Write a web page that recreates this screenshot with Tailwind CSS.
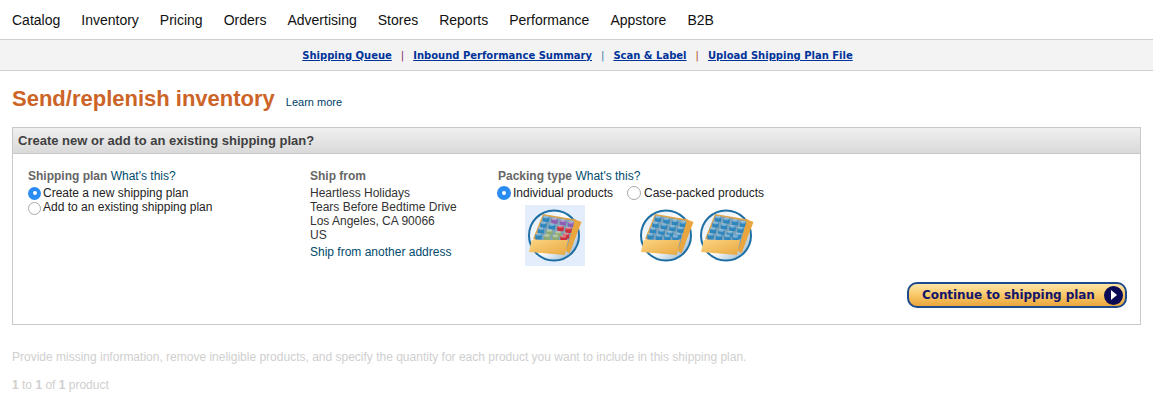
<!DOCTYPE html>
<html>
<head>
<meta charset="utf-8">
<script src="https://cdn.jsdelivr.net/npm/@tailwindcss/browser@4"></script>
</head>
<body class="bg-white font-['Liberation_Sans',Arial,sans-serif] text-[12px] leading-[14px] text-[#333] overflow-hidden">
<svg class="absolute w-0 h-0" aria-hidden="true">
  <defs>
    <linearGradient id="disc" x1="0" y1="0" x2="1" y2="1">
      <stop offset="0" stop-color="#dfeaf3"/><stop offset="0.55" stop-color="#ffffff"/><stop offset="1" stop-color="#7fa6c4"/>
    </linearGradient>
    <linearGradient id="flap" x1="0" y1="0" x2="1" y2="1">
      <stop offset="0" stop-color="#fcd483"/><stop offset="1" stop-color="#e8a940"/>
    </linearGradient>
    <g id="k">
      <rect x="-3.2" y="-2" width="6.4" height="5.3" rx="1" fill="currentColor"/>
      <ellipse cx="0" cy="-1.6" rx="2.8" ry="1.3" fill="#ffffff" fill-opacity="0.35"/>
    </g>
    <g id="box">
      <circle cx="29" cy="30.5" r="25" fill="url(#disc)" stroke="#1c6ea4" stroke-width="2"/>
      <polygon points="18,9 51,14.5 44,46 8,34" fill="#dca348"/>
      <polygon points="18.5,10.5 49.5,16 43,44 10,34" fill="#7fa3ba"/>
    </g>
    <g id="front">
      <polygon points="50,14.5 56.5,17 44.5,48.5 41,46" fill="#eaa63e"/>
      <polygon points="6.7,35 43,35 40,50 4,47" fill="url(#flap)"/>
    </g>
  </defs>
</svg>

<nav class="h-[39px] flex items-center gap-[21px] pl-3 text-[14px] leading-[16px] text-[#111] bg-white">
  <a>Catalog</a><a>Inventory</a><a>Pricing</a><a>Orders</a><a>Advertising</a><a>Stores</a><a>Reports</a><a>Performance</a><a>Appstore</a><a>B2B</a>
</nav>

<div class="h-[32px] pt-[1px] pl-[2px] border-y border-[#cfcfcf] bg-[#f3f3f3] flex items-center justify-center gap-[9px] font-['DejaVu_Sans',Verdana,sans-serif] text-[10px] font-bold text-[#003399]">
  <a class="underline">Shipping Queue</a>
  <span class="font-normal text-[#7a1f5c]">|</span>
  <a class="underline">Inbound Performance Summary</a>
  <span class="font-normal text-[#2a7aa8]">|</span>
  <a class="underline">Scan &amp; Label</a>
  <span class="font-normal text-[#a8461f]">|</span>
  <a class="underline">Upload Shipping Plan File</a>
</div>

<main class="px-3">
  <div class="h-[56px] flex items-center gap-[11px]">
    <h1 class="text-[22px] leading-[26px] font-bold text-[#cc6428]">Send/replenish inventory</h1>
    <a class="text-[11px] leading-[13px] text-[#00406a] mt-[7px]">Learn more</a>
  </div>

  <section class="h-[198px] border border-[#c8c8c8] flex flex-col">
    <div class="h-[26px] flex items-center pl-[5px] border-b border-[#c8c8c8] bg-gradient-to-b from-[#f0f0f0] to-[#d9d9d9] text-[13px] font-bold text-[#3f3f3f]">Create new or add to an existing shipping plan?</div>
    <div class="flex pl-[15px] pt-[15px]">
      <div class="w-[282px]">
        <p class="h-[17px] leading-[14px]"><b class="text-[#666]">Shipping plan</b> <a class="text-[#004b6e]">What's this?</a></p>
        <label class="flex items-center h-[14px] gap-[2px] text-[#222]">
          <span class="w-[13px] h-[13px] rounded-full bg-[#2a8bf2] flex items-center justify-center"><span class="w-[4px] h-[4px] rounded-full bg-white"></span></span>
          <span>Create a new shipping plan</span>
        </label>
        <label class="flex items-center h-[14px] gap-[2px] text-[#222]">
          <span class="w-[13px] h-[13px] rounded-full bg-white border border-[#a9a9a9] mt-[3px]"></span>
          <span>Add to an existing shipping plan</span>
        </label>
      </div>
      <div class="w-[188px] text-[#333]">
        <p class="h-[17px]"><b class="text-[#666]">Ship from</b></p>
        <p>Heartless Holidays</p>
        <p>Tears Before Bedtime Drive</p>
        <p>Los Angeles, CA 90066</p>
        <p>US</p>
        <p class="mt-[3px]"><a class="text-[#004b6e]">Ship from another address</a></p>
      </div>
      <div>
        <p class="h-[17px]"><b class="text-[#666]">Packing type</b> <a class="text-[#004b6e]">What's this?</a></p>
        <div class="flex h-[14px] items-center text-[#222]">
          <label class="flex items-center gap-[2px] w-[130px] -ml-[1px]">
            <span class="w-[14px] h-[14px] rounded-full bg-[#2a8bf2] flex items-center justify-center"><span class="w-[4px] h-[4px] rounded-full bg-white"></span></span>
            <span>Individual products</span>
          </label>
          <label class="flex items-center gap-[3px]">
            <span class="w-[14px] h-[14px] rounded-full bg-white border border-[#a9a9a9]"></span>
            <span>Case-packed products</span>
          </label>
        </div>
        <div class="flex mt-[5px] ml-[27px]">
          <svg class="bg-[#e3edfb] shrink-0" width="60" height="61" viewBox="0 0 60 61">
            <use href="#box"/>
            <use href="#k" x="21" y="13.75" color="#2f86bd"/><use href="#k" x="29.5" y="15.5" color="#8c5fb0"/><use href="#k" x="38" y="17.25" color="#8c5fb0"/><use href="#k" x="46" y="19" color="#8c5fb0"/>
            <use href="#k" x="18.5" y="19.5" color="#2f86bd"/><use href="#k" x="27" y="21.25" color="#2f86bd"/><use href="#k" x="35.5" y="23" color="#cc2f3a"/><use href="#k" x="43.5" y="24.75" color="#cc2f3a"/>
            <use href="#k" x="16" y="25.25" color="#2f86bd"/><use href="#k" x="24.5" y="27" color="#8fab72"/><use href="#k" x="33" y="28.75" color="#8fab72"/><use href="#k" x="41" y="30.5" color="#cc2f3a"/>
            <use href="#k" x="13.5" y="31" color="#2f86bd"/><use href="#k" x="22" y="32" color="#8fab72"/><use href="#k" x="30.5" y="32.5" color="#8fab72"/><use href="#k" x="38.5" y="33" color="#cc2f3a"/>
            <use href="#front"/>
          </svg>
          <svg class="ml-[52px] shrink-0" width="60" height="61" viewBox="0 0 60 61">
            <g id="blue">
            <use href="#box"/>
            <g color="#2f86bd">
            <use href="#k" x="21" y="13.75"/><use href="#k" x="29.5" y="15.5"/><use href="#k" x="38" y="17.25"/><use href="#k" x="46" y="19"/>
            <use href="#k" x="18.5" y="19.5"/><use href="#k" x="27" y="21.25"/><use href="#k" x="35.5" y="23"/><use href="#k" x="43.5" y="24.75"/>
            <use href="#k" x="16" y="25.25"/><use href="#k" x="24.5" y="27"/><use href="#k" x="33" y="28.75"/><use href="#k" x="41" y="30.5"/>
            <use href="#k" x="13.5" y="31"/><use href="#k" x="22" y="32"/><use href="#k" x="30.5" y="32.5"/><use href="#k" x="38.5" y="33"/>
            </g>
            <use href="#front"/>
            </g>
          </svg>
          <svg class="shrink-0" width="60" height="61" viewBox="0 0 60 61"><use href="#blue"/></svg>
        </div>
      </div>
    </div>
    <div class="flex justify-end pr-[13px] mt-[16px]">
      <a class="w-[220px] h-[26px] rounded-[10px] border-2 border-[#1d4a8c] bg-gradient-to-b from-[#fee5a6] via-[#f9c866] to-[#e9a63c] flex items-center justify-between pl-[13px] pr-[2px] font-['DejaVu_Sans',Verdana,sans-serif] text-[12px] tracking-[-0.08px] font-bold text-[#14146b]">
        <span>Continue to shipping plan</span>
        <span class="w-[19px] h-[19px] rounded-full bg-[#0b0b55] flex items-center justify-center">
          <svg width="8" height="10" viewBox="0 0 8 10"><polygon points="1,0 7,5 1,10" fill="#ffffff"/></svg>
        </span>
      </a>
    </div>
  </section>

  <p class="mt-[25px] text-[#cfcfcf]">Provide missing information, remove ineligible products, and specify the quantity for each product you want to include in this shipping plan.</p>
  <p class="mt-[14px] text-[#cfcfcf]"><b>1</b> to <b>1</b> of <b>1</b> product</p>
</main>
</body>
</html>
